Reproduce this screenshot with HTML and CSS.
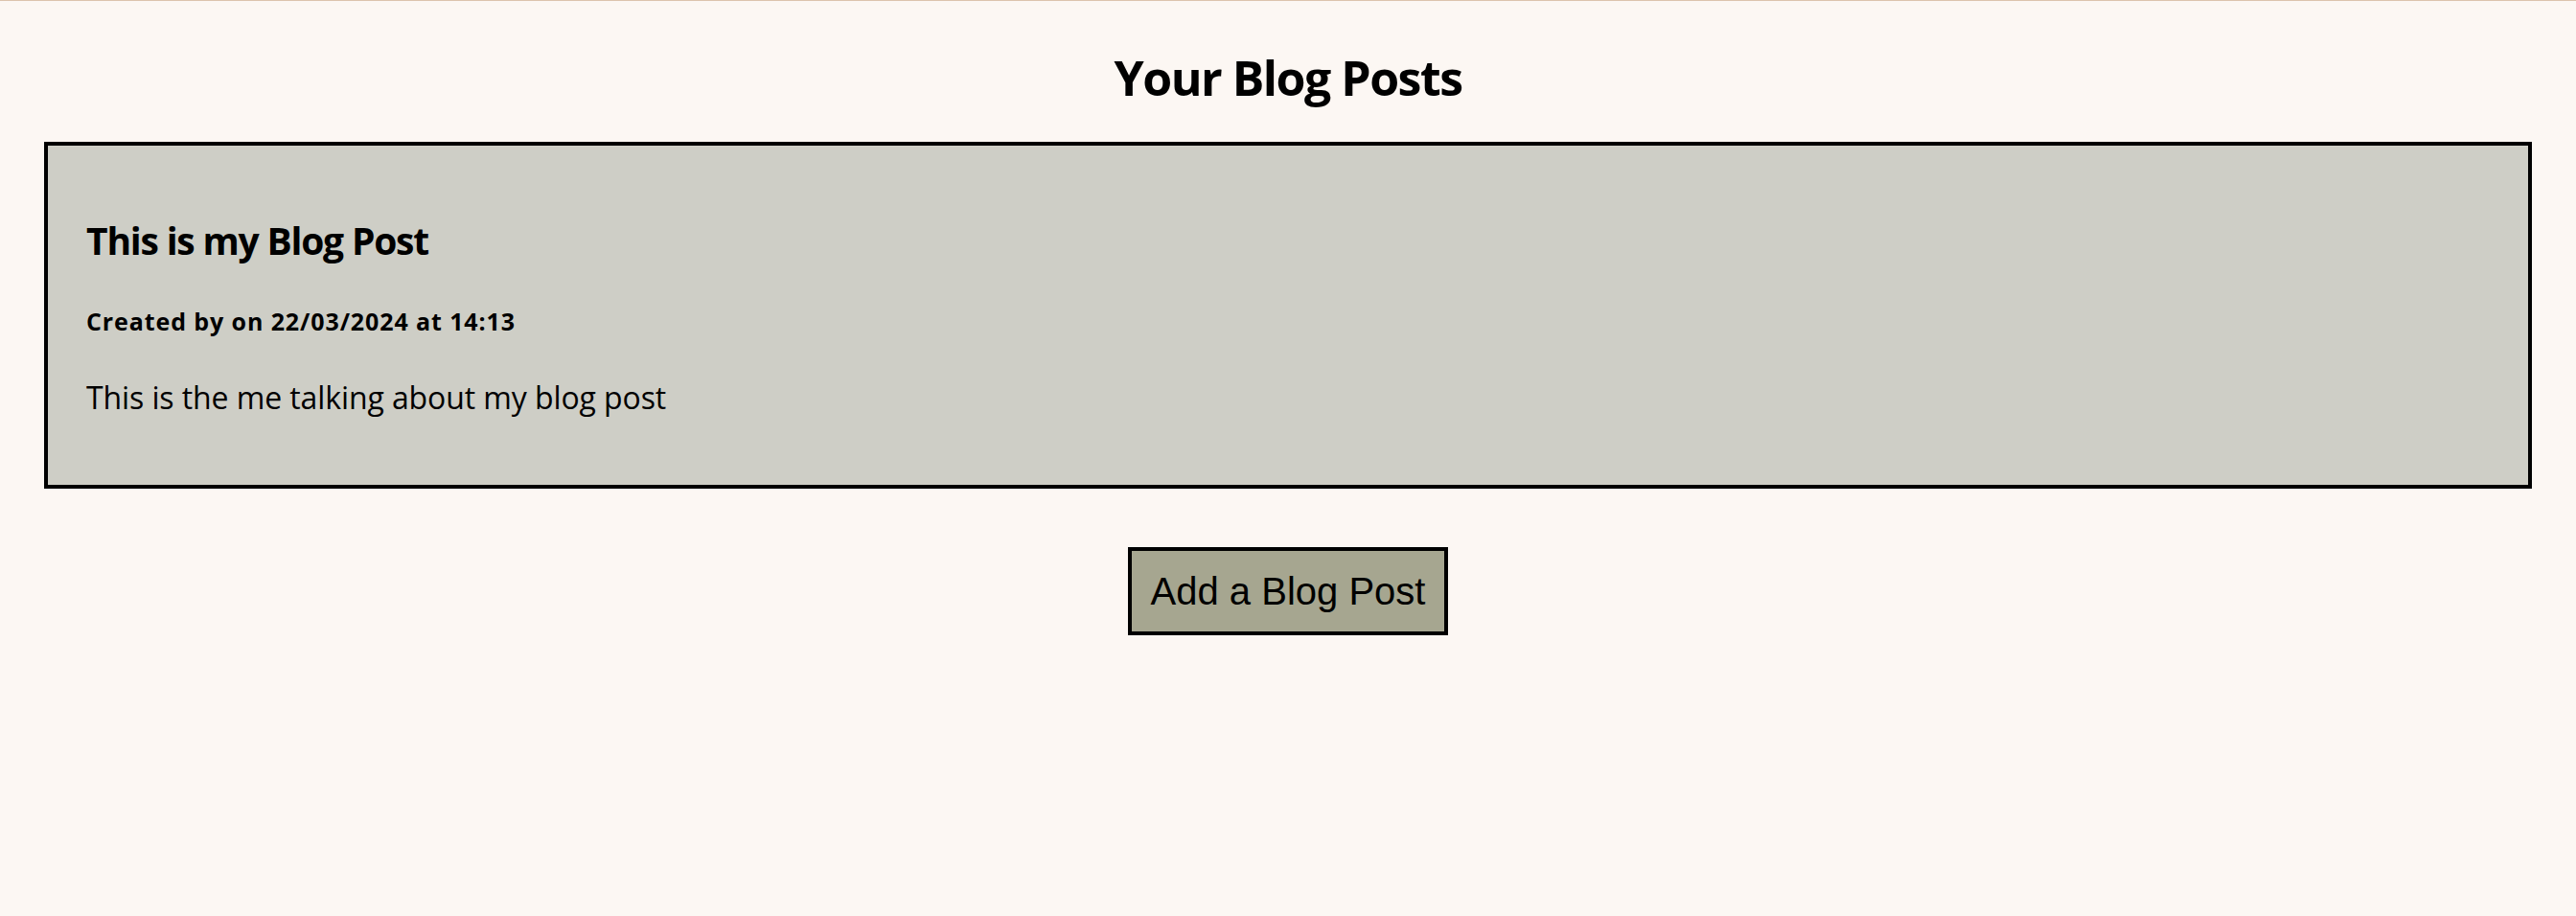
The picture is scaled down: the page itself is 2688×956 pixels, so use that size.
FILE: index.html
```html
<!DOCTYPE html>
<html lang="en">
<head>
<meta charset="utf-8">
<title>Your Blog Posts</title>
<link rel="stylesheet" href="styles.css">
</head>
<body>
<main class="page">
  <h1 class="page-title">Your Blog Posts</h1>
  <section class="posts">
    <article class="post">
      <h3 class="post-title">This is my Blog Post</h3>
      <h6 class="post-meta">Created by on 22/03/2024 at 14:13</h6>
      <p class="post-body">This is the me talking about my blog post</p>
    </article>
  </section>
  <div class="actions">
    <button class="add-btn" type="button">Add a Blog Post</button>
  </div>
</main>
</body>
</html>
```
FILE: styles.css
```css
html, body {
  margin: 0;
  padding: 0;
  background: #fcf7f3;
}

body {
  font-family: "Open Sans", "Noto Sans", sans-serif;
  color: #000;
  min-height: 956px;
}

.page {
  border-top: 1px solid #dcc3ad;
  padding: 50px 46px 0;
}

.page-title {
  margin: 0;
  text-align: center;
  font-size: 50px;
  line-height: 60px;
  font-weight: 700;
  letter-spacing: -1.5px;
}

.posts {
  margin-top: 37px;
}

.post {
  background: #cecec6;
  border: 4px solid #000;
  padding: 76px 40px 71px;
}

.post-title {
  margin: 0;
  font-size: 39px;
  line-height: 46px;
  font-weight: 700;
  letter-spacing: -1.2px;
}

.post-meta {
  margin: 47px 0 0;
  font-size: 25px;
  line-height: 28px;
  font-weight: 700;
  letter-spacing: 0.9px;
}

.post-body {
  margin: 46px 0 0;
  font-size: 32px;
  line-height: 40px;
  font-weight: 400;
  letter-spacing: -0.1px;
}

.actions {
  display: flex;
  justify-content: center;
  margin-top: 61px;
}

.add-btn {
  font-family: "Liberation Sans", Arial, sans-serif;
  font-size: 40px;
  line-height: 46px;
  color: #000;
  background: #a6a690;
  border: 4px solid #000;
  border-radius: 0;
  padding: 19px 20px;
  margin: 0;
}
```
